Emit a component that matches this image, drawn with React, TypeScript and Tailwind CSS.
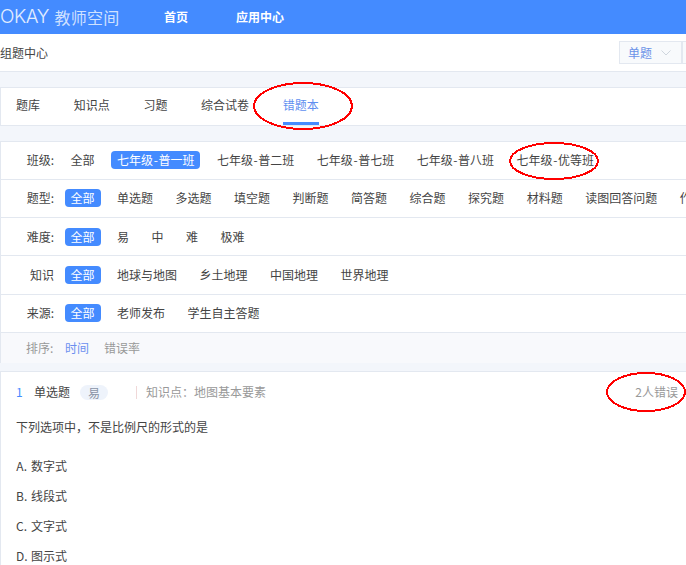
import React from "react";

const font = { fontFamily: '"Noto Sans CJK SC", "Liberation Sans", sans-serif' };

const rows = [
  { label: "班级:", active: "七年级-普一班", pad: "pb-px", items: ["全部", "七年级-普一班", "七年级-普二班", "七年级-普七班", "七年级-普八班", "七年级-优等班"] },
  { label: "题型:", active: "全部", pad: "pb-px", items: ["全部", "单选题", "多选题", "填空题", "判断题", "简答题", "综合题", "探究题", "材料题", "读图回答问题", "作图题"] },
  { label: "难度:", active: "全部", pad: "", items: ["全部", "易", "中", "难", "极难"] },
  { label: "知识", active: "全部", pad: "", tall: true, items: ["全部", "地球与地图", "乡土地理", "中国地理", "世界地理"] },
  { label: "来源:", active: "全部", pad: "pb-px", items: ["全部", "老师发布", "学生自主答题"] },
];

const tabs = ["题库", "知识点", "习题", "综合试卷", "错题本"];
const options = [
  ["A.", "数字式"],
  ["B.", "线段式"],
  ["C.", "文字式"],
  ["D.", "图示式"],
];

// class names have a wider hyphen than the font gives
function ItemText({ text }: { text: string }) {
  const parts = text.split("-");
  if (parts.length < 2) return <>{text}</>;
  return (
    <>
      {parts[0]}
      <span className="px-[0.6px]">-</span>
      {parts[1]}
    </>
  );
}

function FilterRow({ label, active, items, tall, pad }: { label: string; active: string; items: string[]; tall?: boolean; pad: string }) {
  return (
    <div className={`flex items-center border-b border-[#e3e8f0] pl-[25px] whitespace-nowrap ${tall ? "h-[39px]" : "h-[38px]"} ${pad}`}>
      <span className="mr-[10.5px] w-[28px] shrink-0 text-right text-[#444]">{label}</span>
      {items.map((item) => (
        <span
          key={item}
          className={
            item === active
              ? "mr-[10.5px] shrink-0 rounded-sm bg-[#448bff] px-[6px] leading-[18px] text-white"
              : "mr-[10.5px] shrink-0 px-[6px] leading-[18px] text-[#444]"
          }
        >
          <ItemText text={item} />
        </span>
      ))}
    </div>
  );
}

export default function App() {
  return (
    <div className="relative h-[565px] w-[686px] overflow-hidden bg-[#f3f6fb] text-xs" style={font}>
      <header className="flex h-[34px] items-center bg-[#448bff] text-white">
        <span className="w-[54.5px] shrink-0 text-[19px] font-light tracking-tight text-white/85" style={{ fontFamily: "Inter, sans-serif" }}>
          OKAY
        </span>
        <span className="w-[109.5px] shrink-0 text-base tracking-[0.25px] text-white/75">教师空间</span>
        <span className="w-[72px] shrink-0 font-bold">首页</span>
        <span className="font-bold">应用中心</span>
      </header>

      <div className="flex h-[38px] items-center justify-between border-b border-[#e3e8f0] bg-white">
        <span className="text-[#444]">组题中心</span>
        <div className="flex h-[23px] w-[67px] shrink-0 items-center">
          <div className="flex h-full w-[63px] shrink-0 items-center gap-[9px] border border-[#e3e8f0] bg-[#f8fafc] pl-[8px] text-[#6b93e8]">
            <span>单题</span>
            <svg width="10" height="6" viewBox="0 0 10 6" fill="none" stroke="#cfd6de" strokeWidth="1">
              <path d="M0.5 0.5 L5 5 L9.5 0.5" />
            </svg>
          </div>
          <div className="h-full w-[6px] shrink-0 border-y border-l border-[#e3e8f0] bg-[#f8fafc]" />
        </div>
      </div>

      <nav className="mt-[15px] flex h-[39px] gap-[33.7px] border-y border-l border-[#e3e8f0] bg-white pl-[15px]">
        {tabs.map((tab) => (
          <span
            key={tab}
            className={
              tab === "错题本"
                ? "border-b-[3px] border-[#448bff] pt-[9px] text-[#5f8ff0]"
                : "pt-[9px] text-[#444]"
            }
          >
            {tab}
          </span>
        ))}
      </nav>

      <section className="mt-[15px] border-t border-l border-[#e3e8f0] bg-white">
        {rows.map((row) => (
          <FilterRow key={row.label} {...row} />
        ))}
        <div className="flex h-[30px] items-center gap-[15px] bg-[#f8f9fc] pl-[25px]">
          <span className="w-[24px] shrink-0 whitespace-nowrap text-[#999]">排序:</span>
          <span className="text-[#6b8ff0]">时间</span>
          <span className="text-[#999]">错误率</span>
        </div>
      </section>

      <section className="mt-[8px] h-[200px] border-t border-l border-[#e3e8f0] bg-white pl-[15px]">
        <div className="flex h-[40px] items-center pr-[8px]">
          <span className="w-[18px] text-[#448bff]">1</span>
          <span className="text-[#444]">单选题</span>
          <span className="ml-[10px] rounded-full bg-[#eef3fb] px-[8px] leading-[15px] text-[#8a94a6]">易</span>
          <span className="ml-[28px] h-[13px] w-px bg-[#f0d8d8]" />
          <span className="ml-[9px] text-[#999]">知识点：地图基本要素</span>
          <span className="ml-auto text-[#999]">2人错误</span>
        </div>
        <p className="mt-[5px] leading-[20px] text-[#444]">下列选项中，不是比例尺的形式的是</p>
        <div className="mt-[19px] flex flex-col gap-[10px]">
          {options.map(([key, text]) => (
            <p key={key} className="flex leading-[20px] text-[#444]">
              <span className="mr-[4px] w-[11px] text-right">{key}</span>
              {text}
            </p>
          ))}
        </div>
      </section>

      {/* red marks drawn on top of the screenshot */}
      <svg className="pointer-events-none absolute top-0 left-0" width="686" height="565" fill="none" stroke="#f00" strokeWidth="2" shapeRendering="crispEdges">
        <ellipse cx="303" cy="106" rx="49" ry="23" />
        <ellipse cx="554" cy="161" rx="44" ry="18" />
        <ellipse cx="646" cy="392" rx="39" ry="19" />
      </svg>
    </div>
  );
}
